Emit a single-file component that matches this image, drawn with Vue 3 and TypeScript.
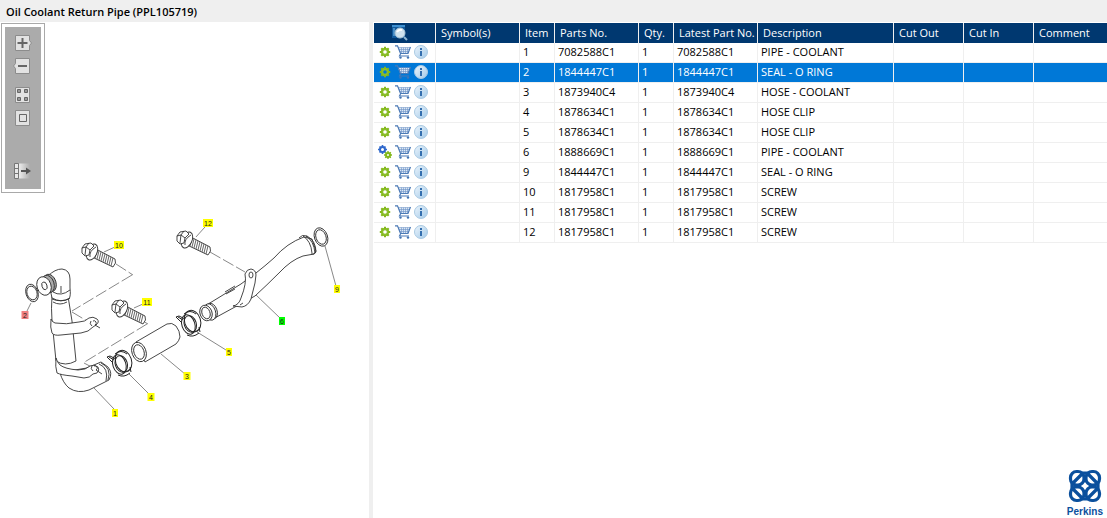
<script setup lang="ts">
import { ref } from 'vue'

interface Part {
  item: number
  no: string
  desc: string
  multi?: boolean
}

const columns = [
  { key: 'symbols', label: 'Symbol(s)' },
  { key: 'item', label: 'Item' },
  { key: 'parts', label: 'Parts No.' },
  { key: 'qty', label: 'Qty.' },
  { key: 'latest', label: 'Latest Part No.' },
  { key: 'description', label: 'Description' },
  { key: 'cutout', label: 'Cut Out' },
  { key: 'cutin', label: 'Cut In' },
  { key: 'comment', label: 'Comment' },
]

const parts: Part[] = [
  { item: 1, no: '7082588C1', desc: 'PIPE - COOLANT' },
  { item: 2, no: '1844447C1', desc: 'SEAL - O RING' },
  { item: 3, no: '1873940C4', desc: 'HOSE - COOLANT' },
  { item: 4, no: '1878634C1', desc: 'HOSE CLIP' },
  { item: 5, no: '1878634C1', desc: 'HOSE CLIP' },
  { item: 6, no: '1888669C1', desc: 'PIPE - COOLANT', multi: true },
  { item: 9, no: '1844447C1', desc: 'SEAL - O RING' },
  { item: 10, no: '1817958C1', desc: 'SCREW' },
  { item: 11, no: '1817958C1', desc: 'SCREW' },
  { item: 12, no: '1817958C1', desc: 'SCREW' },
]

const selected = ref(2)

const callouts = [
  { n: 10, x: 119, y: 245, w: 10, fill: '#ffff00' },
  { n: 12, x: 208, y: 223, w: 10, fill: '#ffff00' },
  { n: 11, x: 147, y: 302, w: 10, fill: '#ffff00' },
  { n: 9, x: 337, y: 289, w: 6, fill: '#ffff00' },
  { n: 6, x: 282, y: 321, w: 6, fill: '#00ff00' },
  { n: 2, x: 25, y: 315, w: 7, fill: '#f08080' },
  { n: 5, x: 229, y: 352, w: 6, fill: '#ffff00' },
  { n: 3, x: 187, y: 376, w: 7, fill: '#ffff00' },
  { n: 4, x: 151, y: 397, w: 7, fill: '#ffff00' },
  { n: 1, x: 115, y: 413, w: 6, fill: '#ffff00' },
]

const bolts = [
  { x: 0, y: 0 },
  { x: 30, y: 57 },
  { x: 95, y: -12 },
]

const threads = [0, 1, 2, 3, 4, 5, 6, 7, 8]
</script>

<template>
  <div class="app">
    <header class="titlebar"><h1>Oil Coolant Return Pipe (PPL105719)</h1></header>
    <main class="panes">
      <section class="drawing" aria-label="Drawing">
        <div class="toolbar">
          <div class="tools">
            <button type="button" aria-label="Zoom in">
              <svg viewBox="0 0 20 18"><path class="face" d="M2.500 1.500h14v5l2 2.500-2 2.500v5h-14z" /><path d="M9.500 4v10M4.500 9h10" stroke="#666" stroke-width="2" /></svg>
            </button>
            <button type="button" aria-label="Zoom out">
              <svg viewBox="0 0 20 18"><path class="face" d="M2.500 1.500h14v15h-14v-5l-2-2.500 2-2.500z" /><path d="M5 9h9" stroke="#666" stroke-width="2" /></svg>
            </button>
            <button type="button" class="gap" aria-label="Show all">
              <svg viewBox="0 0 20 18"><path class="face" d="M2.500 1.500h14v15h-14z" /><path d="M4.500 3.500h3v3h-3zM11.500 3.500h3v3h-3zM4.500 11.500h3v3h-3zM11.500 11.500h3v3h-3z" fill="#999" stroke="#666" /></svg>
            </button>
            <button type="button" aria-label="Fit to window">
              <svg viewBox="0 0 20 18"><path class="face" d="M2.500 1.500h14v15h-14z" /><path d="M6.500 5.500h7v7h-7z" fill="none" stroke="#666" /></svg>
            </button>
            <button type="button" class="far" aria-label="Hide list">
              <svg viewBox="0 0 20 18">
                <defs><linearGradient id="fade"><stop offset="0" stop-color="#ececec" /><stop offset="1" stop-color="#ababab" /></linearGradient></defs>
                <path d="M6 1.500h11v15H6z" fill="url(#fade)" />
                <path d="M1.500 1.500h4v15h-4zM1.500 6.500h4M1.500 11.500h4" fill="#e8e8e8" stroke="#777" />
                <path d="M8 9h6" stroke="#555" stroke-width="2" /><path d="M13 5.500l5 3.500-5 3.500z" fill="#555" />
              </svg>
            </button>
          </div>
        </div>
        <svg class="diagram" viewBox="0 193 369 250" role="img" aria-label="Coolant return pipe exploded view">
          <g class="leader">
            <path d="M104 252l11-5M134 308l9-4M196 237l9-10M325 246l11 40M255 294l25 24M197 332l29 18M161 354l24 20M129 374l20 20M94 388l20 21M31 303l-4 8" />
            <path class="dash" d="M116 264l17 11M132 275l-60 36M72 312l25 15M141 320l7 4M147 324l-64 39M84 363l19 10M210 252l35 20" />
          </g>
          <g class="ink">
            <ellipse cx="32" cy="293" rx="6" ry="9" transform="rotate(-18 32 293)" />
            <ellipse cx="32" cy="293" rx="5" ry="7" transform="rotate(-18 32 293)" />
            <ellipse cx="321" cy="237" rx="6.500" ry="9.500" transform="rotate(-20 321 237)" />
            <ellipse cx="321" cy="237" rx="5" ry="7.500" transform="rotate(-20 321 237)" />

            <!-- lower pipe -->
            <path class="body" d="M60 373q3 10 9 15q9 6 20 2l20-10q4-7-1-13l-7-5-14 6-18 3z" />
            <path d="M99 364q10 4 7 17M101 363q11 5 7 17" />
            <path class="body" d="M52 296q-1 12 0 25l4 40q9 6 20 0l-4-40-4-25z" />
            <path class="body" d="M48 276q7-7 14-7q8 1 8 10v9q1 8-1 11-8 4-17-1-2-5 0-9z" />
            <path d="M53 292q8 5 17-2M61 286v7M52 299q9 4 18-1M53 302q7 4 14 0" />
            <ellipse class="band" cx="50" cy="283" rx="6" ry="9" transform="rotate(-18 50 283)" />
            <ellipse class="band" cx="48" cy="284" rx="6" ry="9" transform="rotate(-18 48 284)" />
            <ellipse class="body" cx="44" cy="286" rx="7" ry="9.500" transform="rotate(-18 44 286)" />
            <ellipse cx="44.500" cy="286" rx="2.500" ry="4" transform="rotate(-18 44 286)" />
            <path class="body" d="M51 319q-1 9 1 14q2 3 9 2l20-2q8-1 12-6l3-2q4-3 1-6-4-3-8-1-4 4-10 4-13 3-24 1-3-1-4-4z" />
            <path d="M91 321q-2 3 1 5M93 321a2 2 0 1 1 2 4l5 3" />
            <path class="body" d="M56 358q-1 9 1 15q4 2 15 3l12 2q6 0 9-4l4-1q3-3 1-6-4-3-8-1-4 4-12 4-13-1-18-5-3-3-4-7z" />
            <path d="M92 366q-2 3 1 5M94 366a2 2 0 1 1 2 4l6 4" />

            <!-- hose -->
            <path class="body" d="M136 342l31-18q5-2 9 2 4 5 4 11-1 4-4 7l-31 18z" />
            <ellipse class="body" cx="139" cy="352" rx="7" ry="10" transform="rotate(-20 139 352)" />
            <ellipse cx="139" cy="352" rx="5" ry="7.500" transform="rotate(-20 139 352)" />

            <!-- clips -->
            <g v-for="c in [[121, 363], [190, 323]]" :key="c[0]" :transform="`translate(${c[0]} ${c[1]})`" class="clip">
              <ellipse cx="3" cy="-1" rx="8" ry="11" transform="rotate(-18)" />
              <ellipse cx="-2" cy="1" rx="6.500" ry="10" transform="rotate(-18)" />
              <ellipse cx="0" cy="1" rx="6" ry="8.500" transform="rotate(-18)" />
              <path d="M-14-6l3-1 6 3M-14-6l6 6M-12-6l5 3M-6-9q6-5 12 0M-3 12q6 3 12-2M9 4l1 5" />
            </g>

            <!-- upper pipe -->
            <path class="body" d="M205 306l36-22 15-11q9-7 18-15 13-15 30-21l8 2 4 12-2 3-11 2q-12 4-24 17-12 12-24 23l-20 11-22 12z" />
            <ellipse class="body" cx="212" cy="311" rx="5" ry="8" transform="rotate(-20 212 311)" />
            <ellipse class="body" cx="210" cy="312" rx="5.500" ry="8.500" transform="rotate(-20 210 312)" />
            <ellipse class="body" cx="206" cy="313" rx="6" ry="8" transform="rotate(-20 206 313)" />
            <ellipse cx="206" cy="313" rx="4" ry="6" transform="rotate(-20 206 313)" />
            <path class="body" d="M245 274q2-5 6-5 5 1 5 6l-1 8-4 16q-3 7-9 8l-9-1q6-1 8-8 6-15 4-24z" />
            <ellipse cx="251" cy="275" rx="2" ry="3" />
            <path d="M225 292l10-6M226 294l9-5M240 305l3-2" />
            <path d="M299 238q3-4 8-2 9 5 9 16-1 3-5 2M303 236q8 5 9 17M306 236q8 5 9 17" />

            <g v-for="b in bolts" :key="b.x" :transform="`translate(${b.x} ${b.y})`">
              <path class="body" d="M94 248l21 11q2 4-2 8l-21-10z" />
              <path v-for="t in threads" :key="t" :d="`M${97 + t * 2} ${250 + t}l-2 8`" class="thread" />
              <ellipse class="body" cx="92" cy="252" rx="5" ry="8.500" transform="rotate(24 92 252)" />
              <path d="M90 257q-1-6 6-10" />
              <path class="body" d="M82 248l3-4 6-1 3 3-4 4-1 5-4 1-3-3z" />
              <path d="M82 248l4-1 4 3M86 247l-1 8M86 247l3-4" />
            </g>
          </g>
          <g v-for="c in callouts" :key="c.n" class="callout">
            <rect :x="c.x - c.w / 2" :y="c.y - 4" :width="c.w" height="8" :fill="c.fill" />
            <text :x="c.x" :y="c.y + 3">{{ c.n }}</text>
          </g>
        </svg>
      </section>

      <section class="list" aria-label="Parts list">
        <table>
          <colgroup><col class="c-icons" /><col v-for="c in columns" :key="c.key" :class="'c-' + c.key" /></colgroup>
          <thead>
            <tr>
              <th scope="col" class="search">
                <svg viewBox="0 0 18 16" role="img" aria-label="Part details">
                  <path d="M1 0h13v2H1z" fill="#3d8fd0" /><path d="M1 2h13v11H1z" fill="#125a9c" />
                  <path d="M2 4h2M2 6h2M2 8h2M2 10h2" stroke="#7fc0ee" />
                  <circle cx="9" cy="8" r="5" fill="#cfe2ee" stroke="#a8c3d6" /><path d="M6 7q2-3 5-2" stroke="#fff" stroke-width="2" fill="none" />
                  <path d="M13 12l3 3" stroke="#8db4d0" stroke-width="2" />
                </svg>
              </th>
              <th v-for="c in columns" :key="c.key" scope="col">{{ c.label }}</th>
            </tr>
          </thead>
          <tbody>
            <tr v-for="p in parts" :key="p.item" :class="{ selected: selected === p.item }" @click="selected = p.item">
              <td>
                <div class="icons">
                  <svg class="gear" viewBox="0 0 14 14" aria-hidden="true">
                    <template v-if="p.multi">
                      <circle cx="4.500" cy="4.500" r="2.500" fill="none" stroke="#2f68cc" stroke-width="2" />
                      <path d="M4.500 0v2M4.500 7v2M0 4.500h2M7 4.500h2M1.500 1.500l1 1M6.500 6.500l1 1M1.500 7.500l1-1M6.500 2.500l1-1" stroke="#2f68cc" stroke-width="1.600" />
                      <circle cx="10" cy="10" r="2" fill="none" stroke="#83b81a" stroke-width="2" />
                      <path d="M10 6v2M10 12v2M6 10h2M12 10h2M7.200 7.200l1 1M11.800 11.800l1 1M7.200 12.800l1-1M11.800 8.200l1-1" stroke="#83b81a" stroke-width="1.400" />
                    </template>
                    <template v-else>
                      <circle cx="7" cy="7" r="3" fill="none" stroke="#8cbe2c" stroke-width="2.400" />
                      <path d="M7 1.800v2M7 10.200v2M1.800 7h2M10.200 7h2M3.300 3.300l1.500 1.500M9.200 9.200l1.500 1.500M3.300 10.700l1.500-1.500M9.200 4.800l1.500-1.500" stroke="#83b81a" stroke-width="2" />
                    </template>
                  </svg>
                  <svg class="cart" viewBox="0 0 16 14" aria-hidden="true">
                    <path d="M3 3h12l-2 5H5z" fill="#dbe7f5" />
                    <path d="M3 2.500h12.500M4 4.500h10.500M4.500 6.500h9M6.500 2.500V8M8.500 2.500V8M10.500 2.500V8M12.500 2.500V8" stroke="#6e93c6" stroke-width=".6" />
                    <path d="M0 .8h2.500l3 7.700h7.500l2.500-6.500M5.500 9l-1 2h9.500" fill="none" stroke="#4b79b5" stroke-width="1.200" />
                    <circle cx="5.500" cy="12.600" r="1.200" fill="#4374b3" /><circle cx="13" cy="12.600" r="1.200" fill="#4374b3" />
                  </svg>
                  <svg class="info" viewBox="0 0 14 14" aria-hidden="true">
                    <defs><linearGradient :id="'info' + p.item" x1="0" y1="0" x2="1" y2="1"><stop offset="0" stop-color="#edf5fc" /><stop offset="1" stop-color="#a2c9e8" /></linearGradient></defs>
                    <circle cx="7" cy="7" r="6.500" :fill="`url(#info${p.item})`" stroke="#a9c9e2" />
                    <path d="M6 3h2v2H6zM6 6h2v5H6z" fill="#336eae" />
                  </svg>
                </div>
              </td>
              <td></td>
              <td>{{ p.item }}</td>
              <td>{{ p.no }}</td>
              <td>1</td>
              <td>{{ p.no }}</td>
              <td>{{ p.desc }}</td>
              <td></td>
              <td></td>
              <td></td>
            </tr>
          </tbody>
        </table>
        <div class="brand">
          <svg viewBox="0 0 34 34" aria-hidden="true">
            <g fill="none" stroke="#0b509d" stroke-width="3.200">
              <rect x="2.500" y="2.500" width="13.500" height="13.500" rx="6" /><rect x="18" y="2.500" width="13.500" height="13.500" rx="6" />
              <rect x="2.500" y="18" width="13.500" height="13.500" rx="6" /><rect x="18" y="18" width="13.500" height="13.500" rx="6" />
              <path d="M4 15L15 4M19 4l11 11M4 19l11 11M19 30l11-11" />
              <path d="M14 4h6M14 30h6M4 14v6M30 14v6" />
            </g>
          </svg>
          <span>Perkins</span>
        </div>
      </section>
    </main>
  </div>
</template>

<style>
html, body { margin: 0; height: 100%; }
#app { height: 100%; }
</style>

<style scoped>
.app {
  display: flex;
  flex-direction: column;
  min-height: 100vh;
  background: #fff;
  color: #000;
  font: 11px/16px "Open Sans", "Noto Sans", sans-serif;
}
.titlebar { background: #efefef; padding: 4px 6px 3px; }
h1 { margin: 0; font-size: 11px; line-height: 15px; font-weight: 600; }
.panes { flex: 1; display: flex; }
.drawing { flex: 0 0 33.3333%; padding-top: 1px; box-sizing: border-box; }
.toolbar { width: 36px; margin-left: 1px; padding: 3px; border: 1px solid #a9a9a9; }
.tools { display: flex; flex-direction: column; align-items: center; height: 154px; padding: 7px 0 1px; background: #ababab; }
button { display: block; width: 20px; height: 18px; margin: 0 0 5px; padding: 0; border: 0; background: none; }
button.gap { margin-top: 6px; }
button.far { margin-top: 30px; }
button svg { display: block; width: 20px; height: 18px; }
.face { fill: #e2e2e2; stroke: #8c8c8c; }
.diagram { display: block; width: 100%; }
.leader { fill: none; stroke: #555; }
.leader path { stroke-width: .7; }
.leader .dash { stroke-dasharray: 12 3; }
.ink { fill: none; stroke: #333; stroke-width: .9; stroke-linejoin: round; }
.body { fill: #fff; }
.band { fill: #aaa; }
.thread { stroke: #555; }
.clip { stroke: #222; stroke-width: 1; }
.callout text { font: 7px "Liberation Sans", Arial, sans-serif; text-anchor: middle; fill: #222; }
.list {
  flex: 1;
  min-width: 0;
  display: flex;
  flex-direction: column;
  border-left: 4px solid #efefef;
  padding: 1px 0 0 1px;
}
table { width: 100%; table-layout: fixed; border-collapse: separate; border-spacing: 0; }
.c-icons { width: 62px; }
.c-symbols, .c-parts, .c-latest { width: 84px; }
.c-item, .c-qty { width: 35px; }
.c-description { width: 136px; }
.c-cutout, .c-cutin { width: 70px; }
th, td { overflow: hidden; white-space: nowrap; border-right: 1px solid #efefef; text-align: left; }
th { padding: 0 0 0 5px; height: 20px; line-height: 20px; background: #003870; color: #fff; font-weight: 400; }
td { padding: 0 0 2px 3px; height: 17px; line-height: 17px; border-bottom: 1px solid #efefef; }
th:last-child, td:last-child { border-right: 0; }
.selected td { background: #0078d7; color: #fff; }
.search svg { display: block; width: 18px; height: 16px; margin-left: 12px; }
.icons { display: flex; align-items: center; gap: 3px; height: 17px; padding-left: 1px; }
.gear { width: 14px; height: 14px; }
.cart { width: 16px; height: 14px; }
.info { width: 14px; height: 14px; }
.brand { display: flex; flex-direction: column; align-items: center; align-self: flex-end; margin: auto 4px 0 0; color: #0b509d; font: bold 10px/13px "Liberation Sans", Arial, sans-serif; }
.brand svg { width: 34px; height: 34px; margin-bottom: 2px; }
</style>
